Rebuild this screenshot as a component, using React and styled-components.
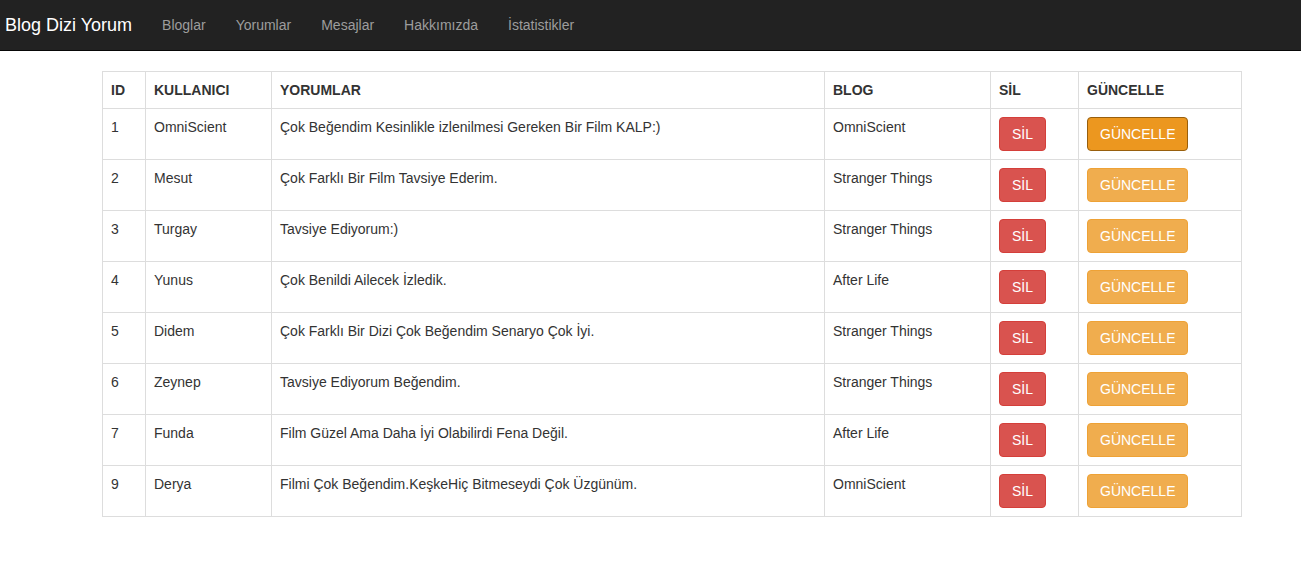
import React from 'react';
import styled, { createGlobalStyle } from 'styled-components';

const GlobalStyle = createGlobalStyle`
  body {
    margin: 0;
    background: #ffffff;
    font-family: 'Liberation Sans', Arial, sans-serif;
    font-size: 14px;
    line-height: 1.42857143;
    color: #333333;
  }
`

const Navbar = styled.nav`
  display: flex;
  align-items: center;
  height: 50px;
  background-color: #222222;
  border-bottom: 1px solid #080808;
  margin-bottom: 20px;
`

const Brand = styled.a`
  font-size: 18px;
  line-height: 20px;
  color: #ffffff;
  padding: 15px 15px 15px 5px;
  text-decoration: none;
`

const NavLink = styled.a`
  color: #9d9d9d;
  font-size: 14px;
  line-height: 20px;
  padding: 15px;
  text-decoration: none;
`

const Container = styled.div`
  padding-left: 102px;
`

const Table = styled.table`
  width: 1139px;
  border-collapse: collapse;
  border-spacing: 0;
  table-layout: fixed;
`

const Th = styled.th`
  box-sizing: border-box;
  text-align: left;
  font-weight: bold;
  padding: 8px;
  line-height: 20px;
  border: 1px solid #dddddd;
  width: ${(p) => p.$w}px;
  vertical-align: bottom;
`

const Td = styled.td`
  padding: 8px;
  line-height: 20px;
  border: 1px solid #dddddd;
  vertical-align: top;
  white-space: nowrap;
`

const Button = styled.button`
  font-family: 'Liberation Sans', Arial, sans-serif;
  font-size: 14px;
  line-height: 20px;
  padding: 6px 12px;
  border-radius: 4px;
  color: #ffffff;
  cursor: pointer;
  border: 1px solid ${(p) => p.$border};
  background-color: ${(p) => p.$bg};
`

const comments = [
  { id: 1, user: 'OmniScient', text: 'Çok Beğendim Kesinlikle izlenilmesi Gereken Bir Film KALP:)', blog: 'OmniScient' },
  { id: 2, user: 'Mesut', text: 'Çok Farklı Bir Film Tavsiye Ederim.', blog: 'Stranger Things' },
  { id: 3, user: 'Turgay', text: 'Tavsiye Ediyorum:)', blog: 'Stranger Things' },
  { id: 4, user: 'Yunus', text: 'Çok Benildi Ailecek İzledik.', blog: 'After Life' },
  { id: 5, user: 'Didem', text: 'Çok Farklı Bir Dizi Çok Beğendim Senaryo Çok İyi.', blog: 'Stranger Things' },
  { id: 6, user: 'Zeynep', text: 'Tavsiye Ediyorum Beğendim.', blog: 'Stranger Things' },
  { id: 7, user: 'Funda', text: 'Film Güzel Ama Daha İyi Olabilirdi Fena Değil.', blog: 'After Life' },
  { id: 9, user: 'Derya', text: 'Filmi Çok Beğendim.KeşkeHiç Bitmeseydi Çok Üzgünüm.', blog: 'OmniScient' },
];

const App = () => {
  return (
    <>
      <GlobalStyle />
      <Navbar>
        <Brand href="#">Blog Dizi Yorum</Brand>
        <NavLink href="#">Bloglar</NavLink>
        <NavLink href="#">Yorumlar</NavLink>
        <NavLink href="#">Mesajlar</NavLink>
        <NavLink href="#">Hakkımızda</NavLink>
        <NavLink href="#">İstatistikler</NavLink>
      </Navbar>
      <Container>
        <Table>
          <thead>
            <tr>
              <Th $w={43}>ID</Th>
              <Th $w={126}>KULLANICI</Th>
              <Th $w={553}>YORUMLAR</Th>
              <Th $w={166}>BLOG</Th>
              <Th $w={88}>SİL</Th>
              <Th $w={163}>GÜNCELLE</Th>
            </tr>
          </thead>
          <tbody>
            {comments.map((c, i) => (
              <tr key={c.id}>
                <Td>{c.id}</Td>
                <Td>{c.user}</Td>
                <Td>{c.text}</Td>
                <Td>{c.blog}</Td>
                <Td>
                  <Button $bg="#d9534f" $border="#d43f3a">SİL</Button>
                </Td>
                <Td>
                  {i === 0
                    ? <Button $bg="#ec971f" $border="#985f0d">GÜNCELLE</Button>
                    : <Button $bg="#f0ad4e" $border="#eea236">GÜNCELLE</Button>}
                </Td>
              </tr>
            ))}
          </tbody>
        </Table>
      </Container>
    </>
  )
}

export default App;
